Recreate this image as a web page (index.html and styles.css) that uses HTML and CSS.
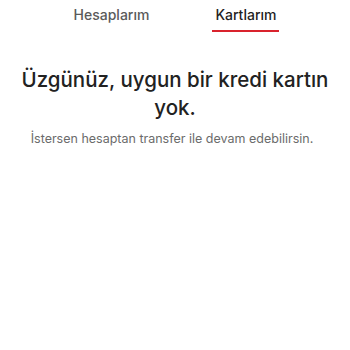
FILE: index.html
```html
<!DOCTYPE html>
<html lang="tr">
<head>
    <meta charset="UTF-8">
    <meta name="viewport" content="width=device-width, initial-scale=1.0">
    <title>Kartlarım</title>
    <link rel="stylesheet" href="styles.css">
</head>
<body>
    <div class="tabs">
        <div class="tab">Hesaplarım</div>
        <div class="tab active">Kartlarım</div>
    </div>
    <div class="empty-state">
        <h1 class="empty-title">Üzgünüz, uygun bir kredi kartın yok.</h1>
        <p class="empty-text">İstersen hesaptan transfer ile devam edebilirsin.</p>
    </div>
</body>
</html>
```

FILE: styles.css
```css
body {
    font-family: 'Inter', 'Noto Sans', sans-serif;
    background-color: #ffffff;
    color: #222222;
    margin: 0;
    padding: 0;
}

.tabs {
    display: flex;
    justify-content: center;
    gap: 60px;
    padding-top: 4px;
}

.tab {
    font-size: 14px;
    font-weight: 500;
    color: #5a5a5a;
    padding: 2px 3px 7px;
    border-bottom: 2px solid transparent;
}

.tab.active {
    color: #1f1f1f;
    border-bottom-color: #d9232d;
}

.empty-state {
    text-align: center;
    padding: 34px 12px 0;
}

.empty-title {
    font-size: 20.5px;
    font-weight: 500;
    line-height: 28px;
    color: #222222;
    margin: 0 0 9px;
}

.empty-text {
    font-size: 12.5px;
    color: #6b6b6b;
    margin: 0;
    padding-right: 6px;
}
```
